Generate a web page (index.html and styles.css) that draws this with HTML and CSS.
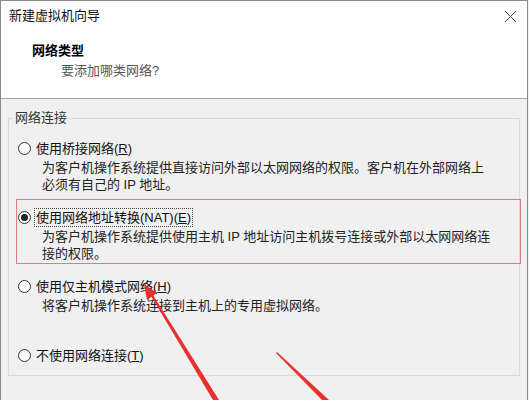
FILE: index.html
```html
<!DOCTYPE html>
<html lang="zh-CN">
  <head>
    <meta charset="UTF-8">
    <title>新建虚拟机向导 - 网络类型</title>
    <link rel="stylesheet" href="styles.css">
  </head>
  <body>
    <div class="window">
      <div class="header">
        <div class="titlebar">
          <span class="title">新建虚拟机向导</span>
          <svg class="close" width="13" height="13" viewBox="0 0 13 13">
            <path d="M1 1 L12 12 M12 1 L1 12" stroke="#444" stroke-width="1" fill="none"/>
          </svg>
        </div>
        <div class="heading">网络类型</div>
        <div class="subheading">要添加哪类网络?</div>
      </div>

      <div class="content">
        <fieldset class="group">
          <legend>网络连接</legend>

          <div class="option">
            <div class="choice">
              <span class="radio"></span>
              <span class="label">使用桥接网络(<u>R</u>)</span>
            </div>
            <div class="desc">
              <div>为客户机操作系统提供直接访问外部以太网网络的权限。客户机在外部网络上</div>
              <div>必须有自己的 IP 地址。</div>
            </div>
          </div>

          <div class="option marked">
            <div class="choice">
              <span class="radio checked"></span>
              <span class="label focused">使用网络地址转换(NAT)(<u>E</u>)</span>
            </div>
            <div class="desc">
              <div>为客户机操作系统提供使用主机 IP 地址访问主机拨号连接或外部以太网网络连</div>
              <div>接的权限。</div>
            </div>
          </div>

          <div class="option">
            <div class="choice">
              <span class="radio"></span>
              <span class="label">使用仅主机模式网络(<u>H</u>)</span>
            </div>
            <div class="desc">
              <div>将客户机操作系统连接到主机上的专用虚拟网络。</div>
            </div>
          </div>

          <div class="option last">
            <div class="choice">
              <span class="radio"></span>
              <span class="label">不使用网络连接(<u>T</u>)</span>
            </div>
          </div>
        </fieldset>
      </div>

      <svg class="arrows" width="529" height="400" viewBox="0 0 529 400">
        <polygon points="144,284 147,300 157,293" fill="#e8312f"/>
        <polygon points="151,296 153,295 219,400 213,400" fill="#e8312f"/>
        <polygon points="276,353 277,352 329,400 322,400" fill="#e8312f"/>
      </svg>
    </div>
  </body>
</html>
```

FILE: styles.css
```css
html, body {
  margin: 0;
  padding: 0;
  background-color: #f0f0f0;
  font-family: "Liberation Sans", "Noto Sans CJK SC", sans-serif;
  font-size: 13px;
  color: #222;
  overflow: hidden;
}

.window {
  position: relative;
  width: 528px;
  height: 400px;
  box-sizing: border-box;
  border: 1px solid #8a8a8a;
  border-bottom: none;
  background-color: #f0f0f0;
}

.header {
  height: 97px;
  background-color: #fff;
  border-bottom: 1px solid #a0a0a0;
}

.titlebar {
  display: flex;
  justify-content: space-between;
  align-items: center;
  height: 18px;
  padding: 6px 10px 0 8px;
}

.title {
  line-height: 18px;
  color: #111;
}

.close {
  display: block;
}

.heading {
  margin: 17px 0 0 31px;
  line-height: 18px;
  font-weight: bold;
  color: #000;
}

.subheading {
  margin: 2px 0 0 60px;
  line-height: 18px;
  color: #555;
}

.content {
  padding: 10px 7px 0 7px;
}

.group {
  margin: 0;
  padding: 3px 0 9px 0;
  min-width: 0;
  border: 1px solid #d8d8d8;
}

.group legend {
  margin-left: 4px;
  padding: 0 2px;
  line-height: 18px;
  color: #333;
}

.option {
  margin: 0 -2px 0 7px;
  padding: 8px 0 1px 1px;
  border: 1px solid transparent;
}

.option + .option {
  margin-top: 4px;
}

.option.last {
  margin-top: 21px;
  padding-bottom: 0;
}

.option.marked {
  border-color: #e57a7c;
}

.choice {
  display: flex;
  align-items: center;
  height: 19px;
}

.radio {
  width: 11px;
  height: 11px;
  border: 1px solid #333;
  border-radius: 50%;
  background-color: #fff;
  position: relative;
}

.radio.checked::after {
  content: "";
  position: absolute;
  left: 2px;
  top: 2px;
  width: 7px;
  height: 7px;
  border-radius: 50%;
  background-color: #222;
}

.label {
  margin-left: 3px;
  padding: 0 1px;
  line-height: 17px;
  border: 1px dotted transparent;
  color: #111;
}

.label.focused {
  border-color: #444;
}

.desc {
  margin-top: 1px;
  padding-left: 24px;
  line-height: 17px;
  color: #222;
}

.arrows {
  position: absolute;
  left: -1px;
  top: -1px;
  pointer-events: none;
}
```
